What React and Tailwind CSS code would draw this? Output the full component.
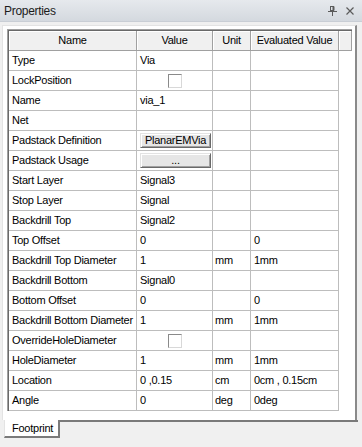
import React from 'react'

const rows = [
  { name: 'Type', value: 'Via' },
  { name: 'LockPosition', kind: 'check' },
  { name: 'Name', value: 'via_1' },
  { name: 'Net', value: '' },
  { name: 'Padstack Definition', kind: 'button', value: 'PlanarEMVia' },
  { name: 'Padstack Usage', kind: 'button', value: '...' },
  { name: 'Start Layer', value: 'Signal3' },
  { name: 'Stop Layer', value: 'Signal' },
  { name: 'Backdrill Top', value: 'Signal2' },
  { name: 'Top Offset', value: '0', evald: '0' },
  { name: 'Backdrill Top Diameter', value: '1', unit: 'mm', evald: '1mm' },
  { name: 'Backdrill Bottom', value: 'Signal0' },
  { name: 'Bottom Offset', value: '0', evald: '0' },
  { name: 'Backdrill Bottom Diameter', value: '1', unit: 'mm', evald: '1mm' },
  { name: 'OverrideHoleDiameter', kind: 'check' },
  { name: 'HoleDiameter', value: '1', unit: 'mm', evald: '1mm' },
  { name: 'Location', value: '0 ,0.15', unit: 'cm', evald: '0cm , 0.15cm' },
  { name: 'Angle', value: '0', unit: 'deg', evald: '0deg' },
]

const headers = ['Name', 'Value', 'Unit', 'Evaluated Value', '']

function PinIcon() {
  return (
    <svg width="9" height="10" viewBox="0 0 9 10" className="text-[#5b5b5b]">
      <rect x="2.5" y="0.5" width="3" height="4" fill="none" stroke="currentColor" strokeWidth="1" />
      <line x1="5.5" y1="0.5" x2="5.5" y2="4.5" stroke="currentColor" strokeWidth="2" />
      <line x1="0" y1="5.5" x2="9" y2="5.5" stroke="currentColor" strokeWidth="1" />
      <line x1="4.5" y1="5.5" x2="4.5" y2="10" stroke="currentColor" strokeWidth="1" />
    </svg>
  )
}

function CloseIcon() {
  return (
    <svg width="8" height="8" viewBox="0 0 8 8" className="text-[#5b5b5b]">
      <path d="M0.5 0.5 L7.5 7.5 M7.5 0.5 L0.5 7.5" stroke="currentColor" strokeWidth="1.2" />
    </svg>
  )
}

function CheckBox() {
  return (
    <div className="mx-auto w-[14px] h-[14px] bg-white border border-t-[#8a8a8a] border-l-[#8a8a8a] border-r-[#d8d8d8] border-b-[#d8d8d8]" />
  )
}

function CellButton({ label }) {
  return (
    <div className="ml-[3px] w-[71px] h-[15px] flex items-center justify-center bg-[#e6e6e6] border border-t-[#e3e3e3] border-l-[#e3e3e3] border-r-[#696969] border-b-[#696969] shadow-[inset_1px_1px_0_#fff,inset_-1px_-1px_0_#a0a0a0] leading-none">
      {label}
    </div>
  )
}

export default function App() {
  return (
    <div className="w-[362px] h-[447px] bg-[#f0f0f0] overflow-hidden font-['Liberation_Sans',Arial,sans-serif] text-[11px] tracking-[-0.25px] text-black">
      {/* title bar */}
      <div className="h-[22px] flex items-center pl-[4px] pr-[8px] bg-gradient-to-b from-[#e6e9ed] to-[#d4d9df] border-b border-[#c9ced5]">
        <span className="text-[12px] tracking-[-0.3px] text-[#1b1b1b]">Properties</span>
        <div className="ml-auto flex items-center gap-[9px]">
          <PinIcon />
          <CloseIcon />
        </div>
      </div>

      {/* tab page */}
      <div className="mt-[3px] ml-[2px] w-[355px] h-[395px] bg-white border-l border-t border-[#e3e3e3] border-r-2 border-r-[#8a8a8a] pl-[4px] pt-[3px]">
        <div className="w-[345px] border-l border-t border-[#a0a0a0]">
          <div className="border-l border-t border-[#696969]">
            <div className="grid grid-cols-[128px_76px_38px_88px_13px] h-[20px]">
              {headers.map((h, i) => (
                <div
                  key={i}
                  className="flex items-center justify-center bg-[#f0f0f0] border-r border-b border-[#a0a0a0] shadow-[inset_1px_1px_0_#fff]"
                >
                  {h}
                </div>
              ))}
            </div>
            {rows.map((r) => (
              <div key={r.name} className="grid grid-cols-[128px_76px_38px_88px] w-[330px] h-[20px]">
                <div className="flex items-center pl-[3px] border-r border-b border-[#bdbdbd] whitespace-nowrap">{r.name}</div>
                <div className="flex items-center border-r border-b border-[#bdbdbd]">
                  {r.kind === 'check' && <CheckBox />}
                  {r.kind === 'button' && <CellButton label={r.value} />}
                  {!r.kind && <span className="pl-[3px] whitespace-nowrap">{r.value}</span>}
                </div>
                <div className="flex items-center pl-[2px] border-r border-b border-[#bdbdbd]">{r.unit}</div>
                <div className="flex items-center pl-[3px] border-r border-b border-[#bdbdbd] whitespace-nowrap">{r.evald}</div>
              </div>
            ))}
          </div>
        </div>
      </div>

      {/* bottom tabs */}
      <div className="flex ml-[2px] w-[357px]">
        <div className="w-[2px]" />
        <div className="w-[56px] h-[18px] bg-white border-l border-[#e3e3e3] border-r-2 border-r-[#7a7a7a] border-b-2 border-b-[#7a7a7a] flex items-center pl-[7px]">
          Footprint
        </div>
        <div className="flex-1 border-t-2 border-[#7a7a7a] mr-[1px]" />
      </div>
    </div>
  )
}
